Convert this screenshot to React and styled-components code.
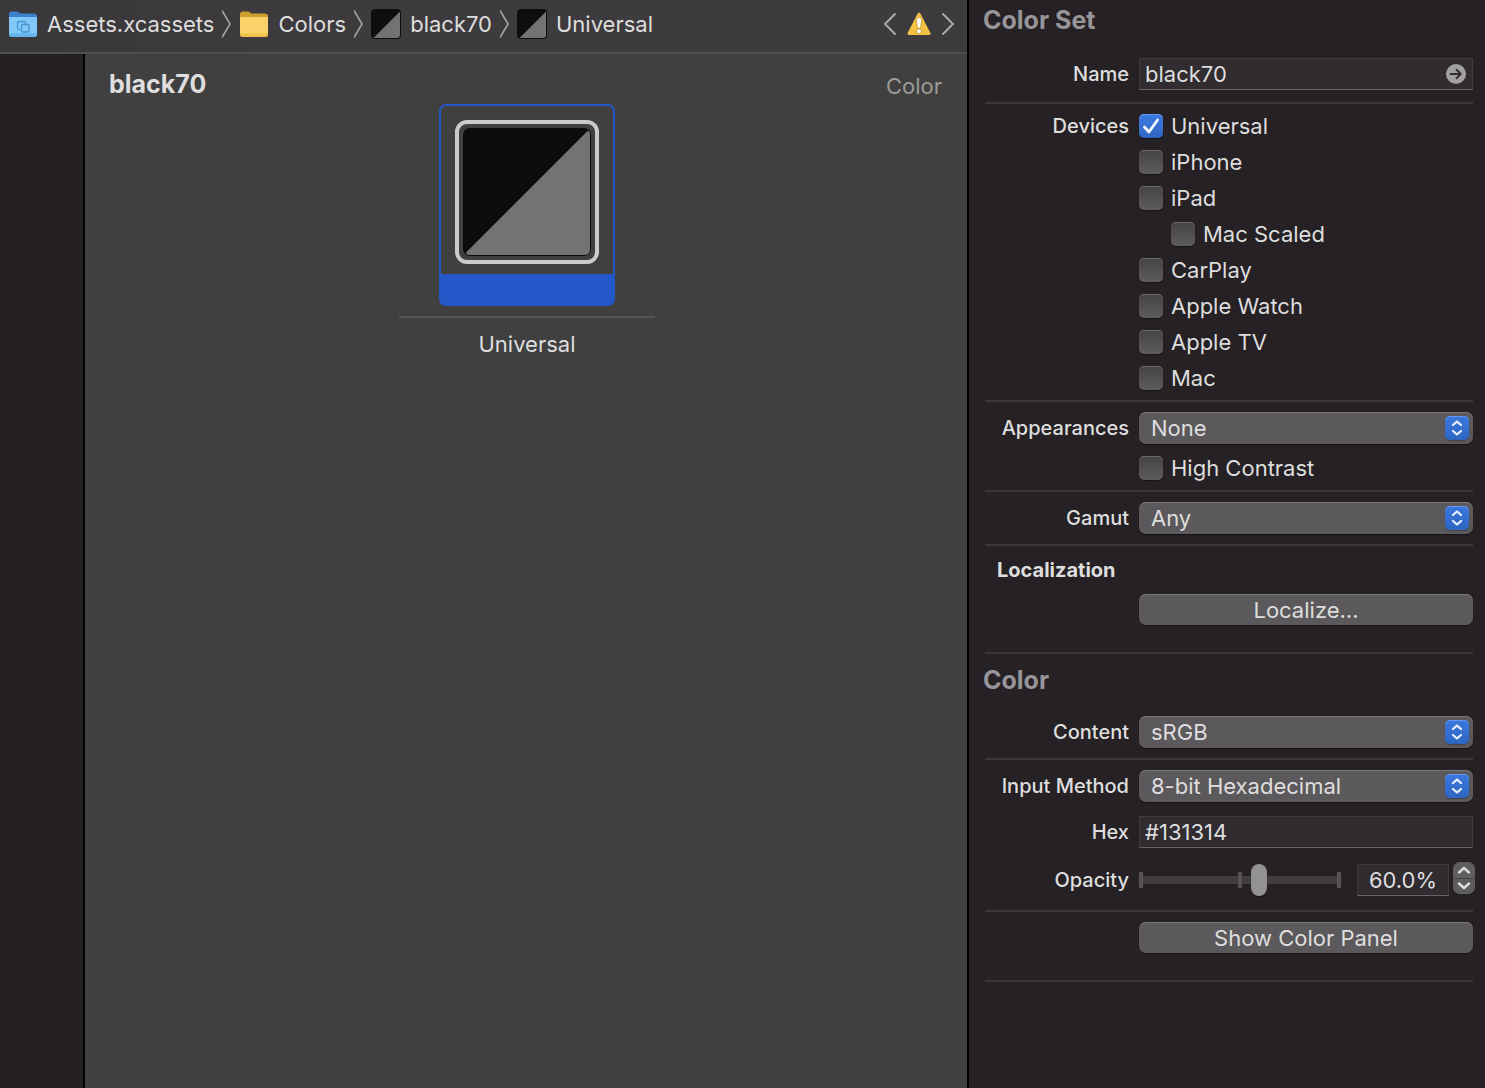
import React, { useId, useState } from "react";
import styled, { createGlobalStyle } from "styled-components";

const GlobalStyle = createGlobalStyle`
  *, *::before, *::after { box-sizing: border-box; }
  html, body, #root { height: 100%; }
  body {
    margin: 0;
    background: #252124;
    color: #dfdedf;
    font: 400 22px/28px Inter, "Liberation Sans", sans-serif;
  }
  button, input, select { font: inherit; color: inherit; margin: 0; }
  h1, h2, h3, p, figure { margin: 0; }
`;

const Window = styled.div`
  display: flex;
  min-height: 100%;
`;

const Editor = styled.main`
  flex: 1;
  min-width: 0;
  display: flex;
  flex-direction: column;
  border-right: 2px solid #000;
`;

const PathBar = styled.header`
  display: flex;
  align-items: center;
  justify-content: space-between;
  height: 54px;
  padding: 0 12px 4px 8px;
  border-bottom: 2px solid #504e50;
  background: linear-gradient(90deg, #3a383a, #3e3b3e 40%);
`;

const Crumbs = styled.nav`
  display: flex;
  align-items: center;
  gap: 8px;
`;

const Crumb = styled.a`
  display: flex;
  align-items: center;
  gap: 9px;
  color: inherit;
  text-decoration: none;
  white-space: nowrap;
`;

const IssueNav = styled.div`
  display: flex;
  align-items: center;
  gap: 10px;
`;

const IconButton = styled.button`
  display: flex;
  padding: 0;
  border: 0;
  background: none;
`;

const Body = styled.div`
  flex: 1;
  display: flex;
`;

const Gutter = styled.aside`
  width: 85px;
  background: #242023;
  border-right: 2px solid #000;
`;

const Canvas = styled.section`
  flex: 1;
  min-width: 0;
  background: #404040;
`;

const CanvasHeader = styled.div`
  display: flex;
  justify-content: space-between;
  align-items: flex-end;
  height: 50px;
  padding: 0 25px 4px 24px;
`;

const AssetName = styled.h1`
  font-size: 25px;
  line-height: 32px;
  font-weight: 700;
`;

const AssetKind = styled.span`
  color: #9b9b9b;
`;

const Well = styled.figure`
  display: flex;
  flex-direction: column;
  align-items: center;
  padding-left: 2px;
`;

const Tile = styled.button`
  width: 176px;
  padding: 14px 14px 40px;
  border: 2px solid #2457c8;
  border-radius: 7px;
  background: linear-gradient(0deg, #2457c8 30px, #404040 30px);
`;

const Ring = styled.span`
  display: block;
  padding: 4px;
  border: 4px solid #cbcbcb;
  border-radius: 12px;
`;

const Caption = styled.figcaption`
  width: 256px;
  margin-top: 10px;
  padding-top: 12px;
  border-top: 2px solid #565656;
  text-align: center;
`;

const Inspector = styled.aside`
  width: 516px;
  padding: 0 12px 0 16px;
`;

const Section = styled.section`
  display: flex;
  flex-direction: column;
  gap: ${(p) => p.$gap || 12}px;
  padding: ${(p) => p.$top || 10}px 0 ${(p) => p.$bottom || 10}px;
  border-bottom: 2px solid #3a363a;
`;

const PanelTitle = styled.h2`
  margin: 0 -2px;
  font-size: 25px;
  line-height: 32px;
  font-weight: 700;
  color: #98959a;
`;

const GroupTitle = styled.h3`
  padding-left: 12px;
  font-size: 20px;
  line-height: 24px;
  font-weight: 700;
`;

const Row = styled.div`
  display: grid;
  grid-template-columns: 144px minmax(0, 1fr);
  column-gap: 10px;
  align-items: center;
`;

const Label = styled.label`
  padding-top: 1px;
  font-size: 20px;
  line-height: 23px;
  font-weight: 500;
  text-align: right;
  white-space: nowrap;
`;

const Control = styled.div`
  grid-column: 2;
`;

const Field = styled.input`
  display: block;
  width: ${(p) => p.$width || "100%"};
  height: 32px;
  padding: 0 5px;
  border: 1px solid #3f3b3f;
  border-bottom-color: #6a676a;
  border-radius: 0;
  outline: 0;
  background: #302c2f;
  text-align: ${(p) => p.$align || "left"};
`;

const FieldFrame = styled.div`
  position: relative;
`;

const FieldAction = styled.button`
  position: absolute;
  top: 6px;
  right: 7px;
  display: flex;
  padding: 0;
  border: 0;
  background: none;
`;

const CheckLabel = styled.label`
  display: flex;
  align-items: center;
  gap: 8px;
  height: 24px;
  padding-left: ${(p) => (p.$nested ? 32 : 0)}px;
`;

const CheckFrame = styled.span`
  display: grid;
  width: 24px;
  height: 24px;

  input, svg { grid-area: 1 / 1; }
  svg { pointer-events: none; visibility: hidden; }
  input:checked + svg { visibility: visible; }
`;

const CheckInput = styled.input`
  appearance: none;
  width: 24px;
  height: 24px;
  border-radius: 5px;
  background: linear-gradient(#454244, #5e5c5e);
  box-shadow: inset 0 1px 0 #6a686a, 0 1px 1px #161316;

  &:checked {
    background: linear-gradient(#3d7be0, #2f66c4);
    box-shadow: inset 0 1px 0 #6095ea, 0 1px 1px #161316;
  }
`;

const SelectFrame = styled.div`
  position: relative;
`;

const SelectInput = styled.select`
  appearance: none;
  display: block;
  width: 100%;
  height: 32px;
  padding: 0 40px 0 12px;
  border: 0;
  border-radius: 7px;
  outline: 0;
  background: #5b595b;
  box-shadow: inset 0 1px 0 #7b797b, 0 1px 1px #161316;
`;

const SelectBadge = styled.span`
  position: absolute;
  top: 4px;
  right: 4px;
  width: 24px;
  height: 24px;
  border-radius: 5px;
  background: linear-gradient(#3b78de, #2e65c2);
  box-shadow: inset 0 1px 0 #6398ec, 0 1px 1px #434143;
  pointer-events: none;

  svg { display: block; }
`;

const PushButton = styled.button`
  display: block;
  width: 100%;
  height: 31px;
  padding: 0;
  border: 0;
  border-radius: 7px;
  background: #5b595b;
  box-shadow: inset 0 1px 0 #7b797b, 0 1px 1px #161316;
`;

const OpacityRow = styled.div`
  display: flex;
  align-items: center;
  gap: 4px;
  height: 36px;
  margin-right: -2px;
`;

const Slider = styled.input`
  appearance: none;
  flex: 1;
  min-width: 0;
  height: 32px;
  && { margin-right: 12px; }
  background:
    linear-gradient(#555255, #555255) left / 4px 16px no-repeat,
    linear-gradient(#555255, #555255) center / 4px 16px no-repeat,
    linear-gradient(#555255, #555255) right / 4px 16px no-repeat,
    linear-gradient(#403d40, #403d40) center / 100% 8px no-repeat;
  outline: 0;

  &::-webkit-slider-thumb {
    appearance: none;
    width: 16px;
    height: 32px;
    border-radius: 8px;
    background: #949194;
    box-shadow: 0 1px 1px #161316;
  }
`;

const Stepper = styled.div`
  align-self: flex-start;
  display: flex;
  flex-direction: column;
  gap: 1px;
  width: 22px;
  height: 32px;
  border-radius: 7px;
  overflow: hidden;
  background: #464346;
`;

const StepButton = styled.button`
  flex: 1;
  display: flex;
  align-items: center;
  justify-content: center;
  padding: 0;
  border: 0;
  background: #5f5d5f;
`;

function AssetFolderIcon() {
  return (
    <svg width="30" height="28" viewBox="0 0 30 28" aria-hidden="true">
      <path d="M1 4.500q0-3 3-3h4.500q1.500 0 2.500 1t2.500 1H26q3 0 3 3V10H1z" fill="#3b82cc" />
      <path d="M1 7h28v17q0 3-3 3H4q-3 0-3-3z" fill="#7fc8f7" />
      <path d="M1 23.500h28v.5q0 3-3 3H4q-3 0-3-3z" fill="#62b4ea" />
      <g fill="none" stroke="#4a94cf" strokeWidth="1.300">
        <path d="M12.500 19.500h-1.500q-1.500 0-1.500-1.500v-5q0-1.500 1.500-1.500h5q1.500 0 1.500 1.500v1.500" />
        <rect x="13.500" y="14.500" width="7.500" height="7.500" rx="1.500" />
      </g>
    </svg>
  );
}

function FolderIcon() {
  return (
    <svg width="30" height="28" viewBox="0 0 30 28" aria-hidden="true">
      <path d="M1 4.500q0-3 3-3h4.500q1.500 0 2.500 1t2.500 1H26q3 0 3 3V10H1z" fill="#cda02e" />
      <path d="M1 7h28v17q0 3-3 3H4q-3 0-3-3z" fill="#f9d26a" />
      <path d="M1 23.500h28v.5q0 3-3 3H4q-3 0-3-3z" fill="#f0c04c" />
    </svg>
  );
}

function SwatchIcon() {
  return (
    <svg width="30" height="30" viewBox="0 0 30 30" aria-hidden="true">
      <rect width="30" height="30" rx="4" fill="#0e0e0f" />
      <path d="M29 2.500V26q0 3-3 3H2.500z" fill="#737373" />
    </svg>
  );
}

function LargeSwatch() {
  return (
    <svg width="128" height="128" viewBox="0 0 128 128" display="block" aria-hidden="true">
      <rect width="128" height="128" rx="7" fill="#0c0c0c" />
      <path d="M124.500 3q2.500 0 2.500 4v114q0 6-6 6H7q-4 0-4-2.500z" fill="#737373" />
    </svg>
  );
}

function CrumbChevron() {
  return (
    <svg width="9" height="28" viewBox="0 0 9 28" fill="none" stroke="#a09ea0" strokeWidth="1.700" aria-hidden="true">
      <path d="M0 .5 8 14 0 27.500" />
    </svg>
  );
}

function NavArrow({ forward }) {
  return (
    <svg width="14" height="24" viewBox="0 0 14 24" fill="none" stroke="#aaa8aa" strokeWidth="2" strokeLinecap="round" aria-hidden="true">
      <path d={forward ? "M2 2l10 10L2 22" : "M12 2L2 12l10 10"} />
    </svg>
  );
}

function WarningIcon() {
  return (
    <svg width="24" height="24" viewBox="0 0 24 24" aria-hidden="true">
      <path d="M12 2.200 22 21.500H2z" fill="#f4c242" stroke="#f4c242" strokeWidth="3" strokeLinejoin="round" />
      <path d="M12 5.500q2.800 0 2.600 2.600l-.9 6.600q-.2 1.700-1.700 1.700t-1.700-1.700l-.9-6.600q-.2-2.600 2.600-2.600z" fill="#fff" stroke="#a98020" strokeWidth=".6" />
      <circle cx="12" cy="19.300" r="2.300" fill="#fff" stroke="#a98020" strokeWidth=".6" />
    </svg>
  );
}

function GoIcon() {
  return (
    <svg width="20" height="20" viewBox="0 0 20 20" aria-hidden="true">
      <circle cx="10" cy="10" r="10" fill="#a3a0a3" />
      <path d="M4.500 10h10M10.500 5.800l4.300 4.200-4.300 4.200" fill="none" stroke="#302c2f" strokeWidth="1.900" strokeLinecap="round" strokeLinejoin="round" />
    </svg>
  );
}

function Checkbox({ label, checked, nested }) {
  return (
    <CheckLabel $nested={nested}>
      <CheckFrame>
        <CheckInput type="checkbox" defaultChecked={checked} />
        <svg width="24" height="24" viewBox="0 0 24 24" fill="none" stroke="#f2f5fb" strokeWidth="2.800" strokeLinecap="round" strokeLinejoin="round" aria-hidden="true">
          <path d="M5.500 13l4.500 5L18.500 6" />
        </svg>
      </CheckFrame>
      {label}
    </CheckLabel>
  );
}

function Popup({ label, options }) {
  const id = useId();
  return (
    <Row>
      <Label htmlFor={id}>{label}</Label>
      <SelectFrame>
        <SelectInput id={id}>
          {options.map((o) => (
            <option key={o}>{o}</option>
          ))}
        </SelectInput>
        <SelectBadge>
          <svg width="24" height="24" viewBox="0 0 24 24" fill="none" stroke="#e9effb" strokeWidth="2.300" strokeLinecap="round" strokeLinejoin="round" aria-hidden="true">
            <path d="M8 9l4-3.500L16 9M8 15l4 3.500 4-3.500" />
          </svg>
        </SelectBadge>
      </SelectFrame>
    </Row>
  );
}

function StepArrow({ down }) {
  return (
    <svg width="14" height="10" viewBox="0 0 14 10" fill="none" stroke="#dedcde" strokeWidth="2.400" strokeLinecap="round" strokeLinejoin="round" aria-hidden="true">
      <path d={down ? "M2 2.500l5 4.500 5-4.500" : "M2 7.500L7 3l5 4.500"} />
    </svg>
  );
}

const crumbs = [
  { text: "Assets.xcassets", Icon: AssetFolderIcon },
  { text: "Colors", Icon: FolderIcon },
  { text: "black70", Icon: SwatchIcon },
  { text: "Universal", Icon: SwatchIcon },
];

const devices = [
  { label: "iPhone" },
  { label: "iPad" },
  { label: "Mac Scaled", nested: true },
  { label: "CarPlay" },
  { label: "Apple Watch" },
  { label: "Apple TV" },
  { label: "Mac" },
];

export default function App() {
  const [opacity, setOpacity] = useState(60);
  const step = (by) => setOpacity((v) => Math.min(100, Math.max(0, v + by)));

  return (
    <Window>
      <GlobalStyle />
      <Editor>
        <PathBar>
          <Crumbs aria-label="Path">
            {crumbs.map(({ text, Icon }, i) => (
              <React.Fragment key={text}>
                {i > 0 && <CrumbChevron />}
                <Crumb href="#">
                  <Icon />
                  {text}
                </Crumb>
              </React.Fragment>
            ))}
          </Crumbs>
          <IssueNav>
            <IconButton aria-label="Previous issue"><NavArrow /></IconButton>
            <IconButton aria-label="Show issues"><WarningIcon /></IconButton>
            <IconButton aria-label="Next issue"><NavArrow forward /></IconButton>
          </IssueNav>
        </PathBar>
        <Body>
          <Gutter />
          <Canvas>
            <CanvasHeader>
              <AssetName>black70</AssetName>
              <AssetKind>Color</AssetKind>
            </CanvasHeader>
            <Well>
              <Tile aria-label="Universal color">
                <Ring><LargeSwatch /></Ring>
              </Tile>
              <Caption>Universal</Caption>
            </Well>
          </Canvas>
        </Body>
      </Editor>

      <Inspector>
        <Section $top={4} $bottom={12} $gap={22}>
          <PanelTitle>Color Set</PanelTitle>
          <Row>
            <Label htmlFor="name">Name</Label>
            <FieldFrame>
              <Field id="name" defaultValue="black70" />
              <FieldAction aria-label="Go to asset"><GoIcon /></FieldAction>
            </FieldFrame>
          </Row>
        </Section>

        <Section>
          <Row>
            <Label as="span">Devices</Label>
            <Checkbox label="Universal" checked />
          </Row>
          {devices.map((d) => (
            <Row key={d.label}>
              <Control><Checkbox {...d} /></Control>
            </Row>
          ))}
        </Section>

        <Section>
          <Popup label="Appearances" options={["None", "Any, Dark"]} />
          <Row>
            <Control><Checkbox label="High Contrast" /></Control>
          </Row>
        </Section>

        <Section>
          <Popup label="Gamut" options={["Any", "sRGB and Display P3"]} />
        </Section>

        <Section $top={12} $bottom={27}>
          <GroupTitle>Localization</GroupTitle>
          <Row>
            <Control><PushButton>Localize...</PushButton></Control>
          </Row>
        </Section>

        <Section $gap={20}>
          <PanelTitle>Color</PanelTitle>
          <Popup label="Content" options={["sRGB", "Display P3"]} />
        </Section>

        <Section $gap={14} $bottom={12}>
          <Popup label="Input Method" options={["8-bit Hexadecimal", "Floating point"]} />
          <Row>
            <Label htmlFor="hex">Hex</Label>
            <Field id="hex" defaultValue="#131314" />
          </Row>
          <Row>
            <Label htmlFor="opacity">Opacity</Label>
            <OpacityRow>
              <Slider id="opacity" type="range" min="0" max="100" value={opacity} onChange={(e) => setOpacity(Number(e.target.value))} />
              <Field $width="92px" $align="center" aria-label="Opacity percent" readOnly value={`${opacity.toFixed(1)}%`} />
              <Stepper>
                <StepButton aria-label="Increase opacity" onClick={() => step(1)}><StepArrow /></StepButton>
                <StepButton aria-label="Decrease opacity" onClick={() => step(-1)}><StepArrow down /></StepButton>
              </Stepper>
            </OpacityRow>
          </Row>
        </Section>

        <Section $bottom={27}>
          <Row>
            <Control><PushButton>Show Color Panel</PushButton></Control>
          </Row>
        </Section>
      </Inspector>
    </Window>
  );
}
